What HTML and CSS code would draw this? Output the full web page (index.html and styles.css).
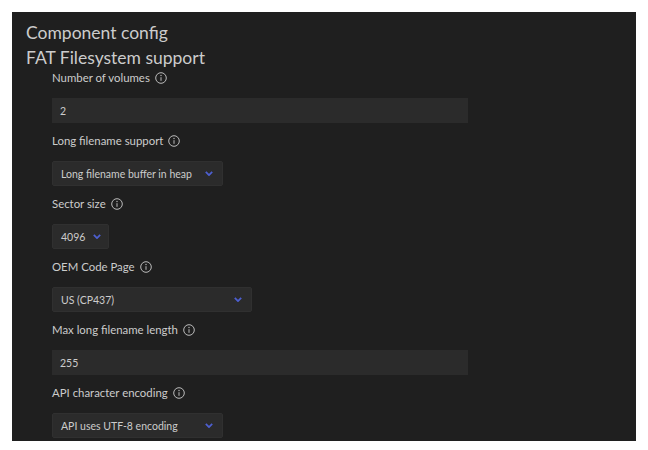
FILE: index.html
```html
<!DOCTYPE html>
<html lang="en">
<head>
  <meta charset="UTF-8" />
  <title>Component config</title>
  <link rel="stylesheet" href="styles.css">
</head>
<body>
  <div class="panel">
    <h1>Component config</h1>
    <h2>FAT Filesystem support</h2>

    <div class="fields">
      <div class="field">
        <label>Number of volumes <svg class="info" viewBox="0 0 12 12"><circle cx="6" cy="6" r="5.3"/><line x1="6" y1="5.2" x2="6" y2="8.8"/><circle class="dot" cx="6" cy="3.5" r="0.7"/></svg></label>
        <div class="text-input wide">2</div>
      </div>

      <div class="field">
        <label>Long filename support <svg class="info" viewBox="0 0 12 12"><circle cx="6" cy="6" r="5.3"/><line x1="6" y1="5.2" x2="6" y2="8.8"/><circle class="dot" cx="6" cy="3.5" r="0.7"/></svg></label>
        <div class="select w-lfn">Long filename buffer in heap <svg class="chev" viewBox="0 0 10 6"><path d="M1 1 L5 5 L9 1"/></svg></div>
      </div>

      <div class="field">
        <label>Sector size <svg class="info" viewBox="0 0 12 12"><circle cx="6" cy="6" r="5.3"/><line x1="6" y1="5.2" x2="6" y2="8.8"/><circle class="dot" cx="6" cy="3.5" r="0.7"/></svg></label>
        <div class="select w-sec">4096 <svg class="chev" viewBox="0 0 10 6"><path d="M1 1 L5 5 L9 1"/></svg></div>
      </div>

      <div class="field">
        <label>OEM Code Page <svg class="info" viewBox="0 0 12 12"><circle cx="6" cy="6" r="5.3"/><line x1="6" y1="5.2" x2="6" y2="8.8"/><circle class="dot" cx="6" cy="3.5" r="0.7"/></svg></label>
        <div class="select w-oem">US (CP437) <svg class="chev" viewBox="0 0 10 6"><path d="M1 1 L5 5 L9 1"/></svg></div>
      </div>

      <div class="field">
        <label>Max long filename length <svg class="info" viewBox="0 0 12 12"><circle cx="6" cy="6" r="5.3"/><line x1="6" y1="5.2" x2="6" y2="8.8"/><circle class="dot" cx="6" cy="3.5" r="0.7"/></svg></label>
        <div class="text-input wide">255</div>
      </div>

      <div class="field">
        <label>API character encoding <svg class="info" viewBox="0 0 12 12"><circle cx="6" cy="6" r="5.3"/><line x1="6" y1="5.2" x2="6" y2="8.8"/><circle class="dot" cx="6" cy="3.5" r="0.7"/></svg></label>
        <div class="select w-lfn">API uses UTF-8 encoding <svg class="chev" viewBox="0 0 10 6"><path d="M1 1 L5 5 L9 1"/></svg></div>
      </div>
    </div>
  </div>
</body>
</html>
```

FILE: styles.css
```css
body {
  margin: 0;
  background: #fff;
  font-family: Lato, "Open Sans", sans-serif;
}

.panel {
  margin: 12px;
  width: 610px;
  height: 429px;
  padding-left: 14px;
  background: #1f1f1f;
  color: #cccccc;
  overflow: hidden;
}

h1, h2 {
  margin: 0;
  font-size: 17.5px;
  font-weight: normal;
  line-height: 25px;
}

h1 { padding-top: 8px; }

.fields {
  padding-left: 26px;
}

.field {
  height: 63px;
}

label {
  display: flex;
  align-items: center;
  gap: 5px;
  font-size: 11.4px;
  line-height: 16px;
  height: 16px;
}

.info {
  width: 12px;
  height: 12px;
  flex-shrink: 0;
  fill: none;
  stroke: #bbbbbb;
  stroke-width: 1;
}

.info .dot {
  fill: #bbbbbb;
  stroke: none;
}

.text-input, .select {
  margin-top: 12px;
  height: 25px;
  box-sizing: border-box;
  padding: 0 8px;
  display: flex;
  align-items: center;
  font-size: 10.5px;
  white-space: nowrap;
  background: #2b2b2b;
  color: #cccccc;
}

.wide { width: 416px; }

.select {
  display: inline-flex;
  justify-content: space-between;
  gap: 8px;
  padding-right: 9px;
  border: 1px solid #303030;
  border-radius: 2px;
}

.w-lfn { width: 171px; }
.w-sec { width: 57px; }
.w-oem { width: 200px; }

.chev {
  width: 8px;
  height: 5px;
  flex-shrink: 0;
  fill: none;
  stroke: #4d5fd0;
  stroke-width: 2.2;
  margin-top: -1px;
}
```
